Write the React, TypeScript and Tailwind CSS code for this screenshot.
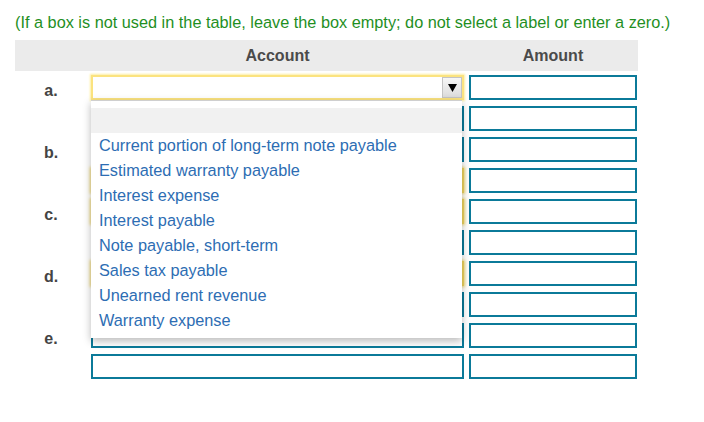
import React from 'react';

const options = [
  'Current portion of long-term note payable',
  'Estimated warranty payable',
  'Interest expense',
  'Interest payable',
  'Note payable, short-term',
  'Sales tax payable',
  'Unearned rent revenue',
  'Warranty expense',
];

// account column kind per row: focused select, plain input, or highlighted select
const accountRows: ('focus' | 'input' | 'select')[] = [
  'focus',
  'input',
  'input',
  'select',
  'select',
  'input',
  'select',
  'input',
  'input',
  'input',
];

const labels = ['a.', 'b.', 'c.', 'd.', 'e.'];

function TextBox() {
  return <div className="h-[25px] border-2 border-[#0b7a99] bg-white" />;
}

function YellowSelect() {
  return (
    <div className="h-[25px] border-2 border-[#efd45e] bg-white shadow-[0_0_3px_1px_#f4dc74]" />
  );
}

function FocusSelect() {
  return (
    <div className="flex h-[25px] justify-end border-2 border-[#fbe37f] bg-white shadow-[0_0_2px_1px_#fdeea0]">
      <div className="flex w-[20px] items-center justify-center border border-[#c4c4c4] bg-gradient-to-b from-[#f7f7f7] to-[#dcdcdc]">
        <svg width="9" height="9" viewBox="0 0 9 9">
          <path d="M0 1h9L4.5 9z" fill="#000" />
        </svg>
      </div>
    </div>
  );
}

export default function App() {
  return (
    <div
      className="relative min-h-[422px] w-[704px] bg-white pl-[15px] pt-[12px]"
      style={{ fontFamily: '"Liberation Sans", Arial, sans-serif' }}
    >
      <p className="text-[16.3px] leading-[20px] text-[#1f8f1f]">
        (If a box is not used in the table, leave the box empty; do not select a label or enter a zero.)
      </p>

      <div className="mt-[8px] w-[623px]">
        {/* Header */}
        <div className="grid h-[31px] grid-cols-[76px_373px_5px_168px] items-center bg-[#ebebeb] text-[16px] font-bold text-[#4a4a4a]">
          <div />
          <div className="text-center">Account</div>
          <div />
          <div className="text-center">Amount</div>
        </div>

        {/* Body */}
        <div className="mt-[4px] grid grid-cols-[71px_373px_168px] gap-x-[5px]">
          <div className="flex flex-col">
            {labels.map((l) => (
              <div
                key={l}
                className="h-[62px] pt-[7px] pl-[1px] text-center text-[16px] font-bold leading-[18px] text-[#444]"
              >
                {l}
              </div>
            ))}
          </div>

          <div className="flex flex-col gap-[6px]">
            {accountRows.map((k, i) =>
              k === 'focus' ? (
                <FocusSelect key={i} />
              ) : k === 'select' ? (
                <YellowSelect key={i} />
              ) : (
                <TextBox key={i} />
              ),
            )}
          </div>

          <div className="flex flex-col gap-[6px]">
            {accountRows.map((_, i) => (
              <TextBox key={i} />
            ))}
          </div>
        </div>
      </div>

      {/* Open dropdown list */}
      <ul className="absolute left-[91px] top-[100px] w-[371px] border-t border-[#cfcfcf] bg-white pt-[7px] pb-[5px] shadow-[0_3px_8px_rgba(0,0,0,0.28)]">
        <li className="h-[25px] bg-[#f1f1f1]" />
        {options.map((o) => (
          <li key={o} className="h-[25px] pl-[8px] text-[16.3px] leading-[24px] text-[#2d6db3]">
            {o}
          </li>
        ))}
      </ul>
    </div>
  );
}
